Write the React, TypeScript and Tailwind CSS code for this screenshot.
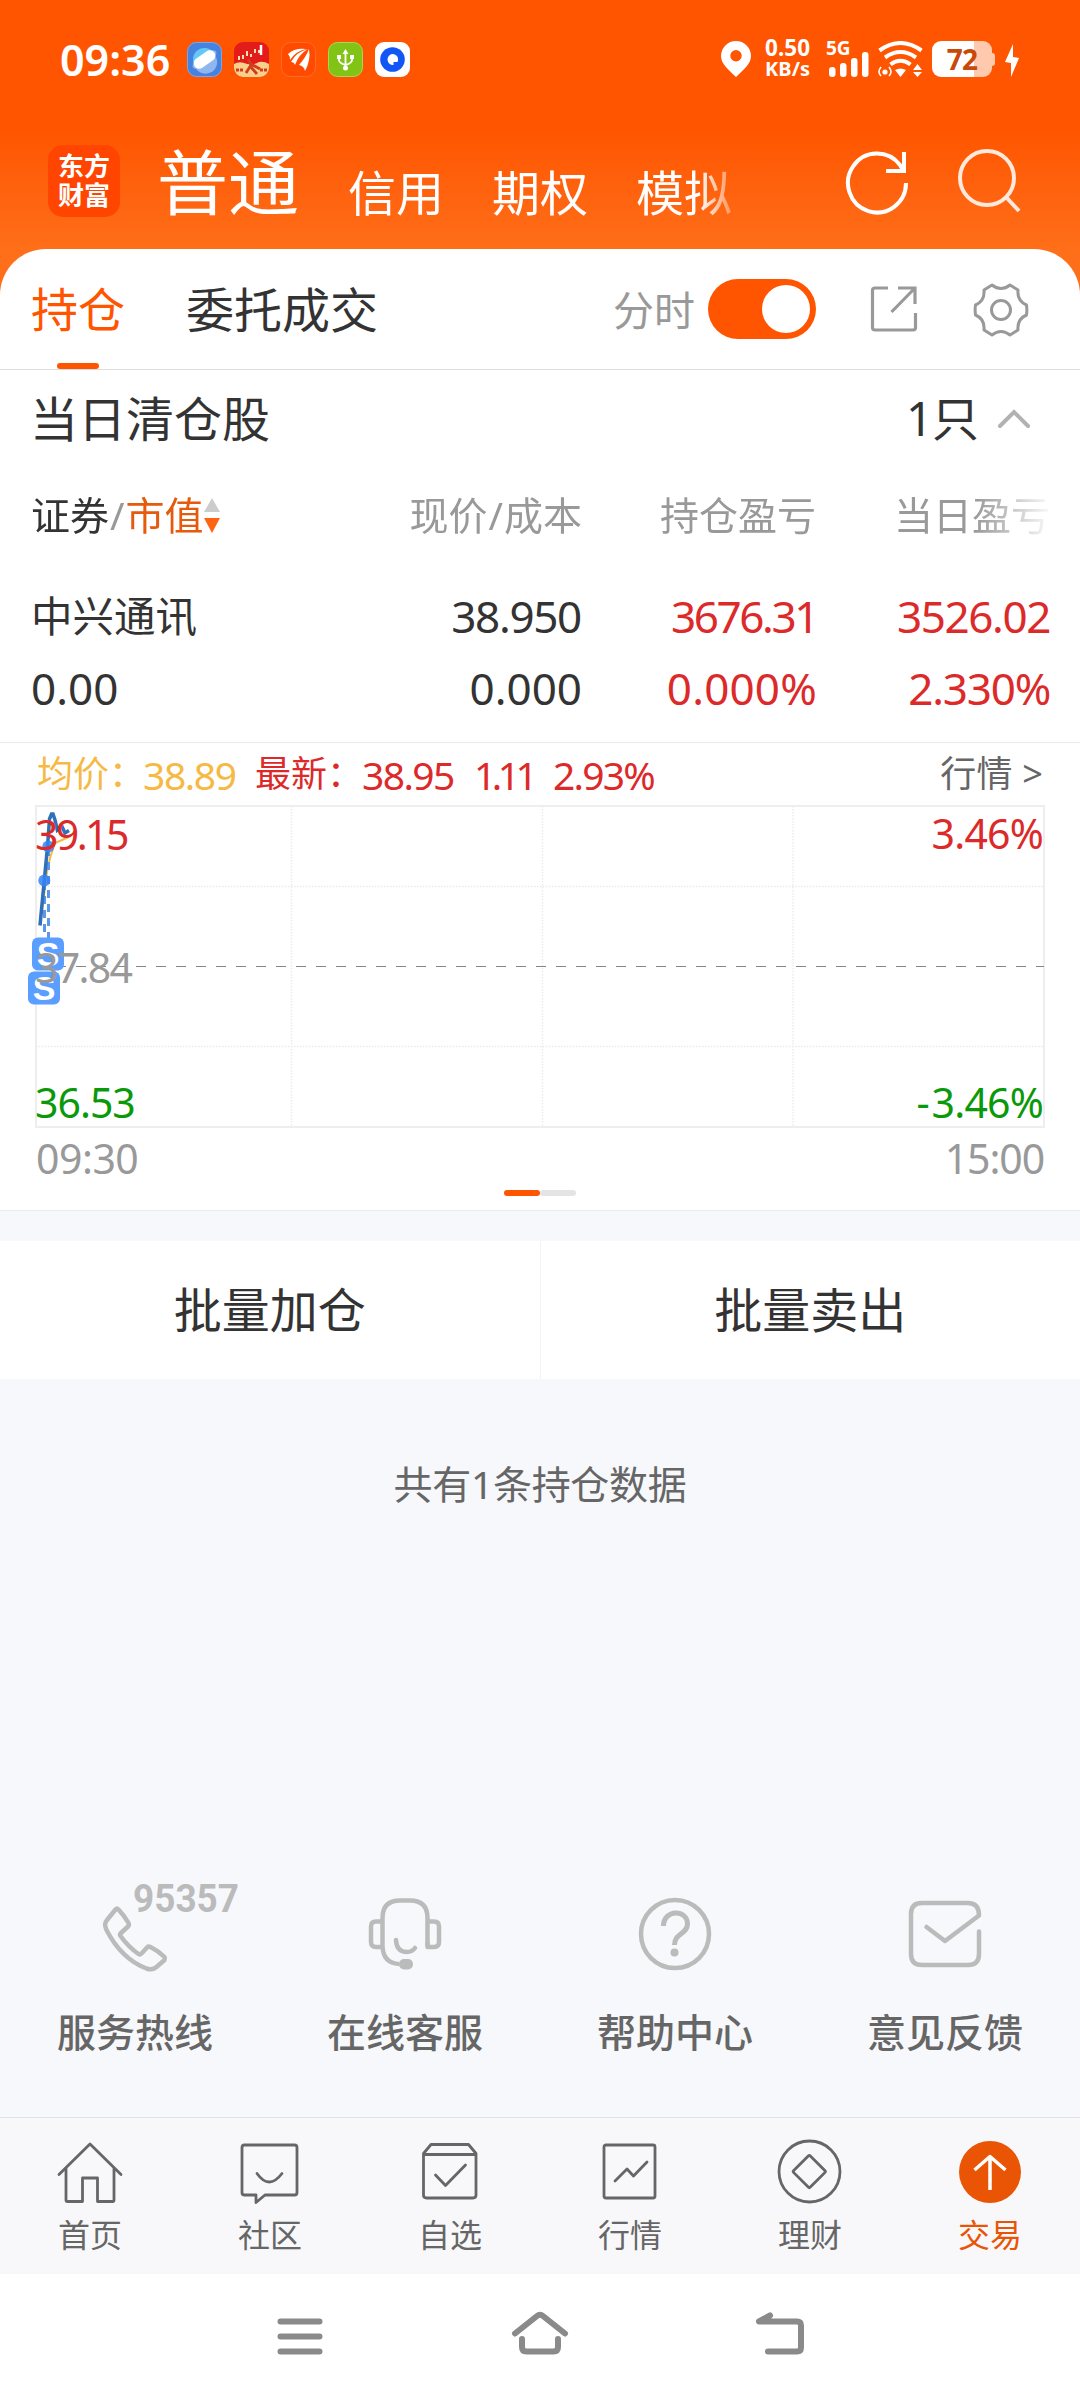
import React from 'react';
import clsx from 'clsx';

interface Holding {
  name: string;
  marketValue: string;
  price: string;
  cost: string;
  profit: string;
  profitRate: string;
  dayProfit: string;
  dayProfitRate: string;
}

const holding: Holding = {
  name: '中兴通讯',
  marketValue: '0.00',
  price: '38.950',
  cost: '0.000',
  profit: '3676.31',
  profitRate: '0.000%',
  dayProfit: '3526.02',
  dayProfitRate: '2.330%',
};

// Status bar
const StatusBar: React.FC = () => (
  <div className="flex h-[120px] items-center justify-between pr-[61px] pb-[2px] pl-[60px] text-white">
    <div className="flex items-center">
      <span className="w-[127px] text-[43px] leading-none font-semibold">09:36</span>
      <div className="flex gap-[12px]">
        <svg className="h-[35px] w-[35px]" viewBox="0 0 35 35" aria-hidden="true">
          <rect x=".5" y=".5" width="34" height="34" rx="9" fill="#4683e0" stroke="#7ba6e8" />
          <circle cx="17.5" cy="17.5" r="11.5" fill="#62c9f5" />
          <path d="M8 25a11.5 11.5 0 0 0 21-10z" fill="#8fb6ef" />
          <ellipse cx="17.5" cy="17.5" rx="14" ry="5.5" fill="#8fb6ef" transform="rotate(-35 17.5 17.5)" />
          <rect x="5.500" y="12" width="24" height="11" rx="5.500" fill="#fff" transform="rotate(-35 17.5 17.5)" />
        </svg>
        <svg className="h-[35px] w-[35px]" viewBox="0 0 35 35" aria-hidden="true">
          <rect width="35" height="35" rx="9" fill="#e41b1b" />
          <path d="M0 22q5-3 10-1 8 3 15-1 5-1 10 2v4a9 9 0 0 1-9 9H9a9 9 0 0 1-9-9z" fill="#fbd08a" />
          <path d="M5 14v4M9 13v4M13 9v5M17 12v3M21 7v4M25 8v3" stroke="#fbe3b0" strokeWidth="2" />
          <path d="M27 3v10" stroke="#fff" strokeWidth="2.500" />
          <path d="m14 17 3 6-5 8m4-7 7 8m-6-10 9 5" stroke="#d33a20" strokeWidth="2.800" fill="none" />
          <path d="M2 28h7M26 28h7" stroke="#d33a20" strokeWidth="3" strokeDasharray="3 1" />
        </svg>
        <svg className="h-[35px] w-[35px]" viewBox="0 0 35 35" aria-hidden="true">
          <rect x=".5" y=".5" width="34" height="34" rx="9" fill="#ff4a00" stroke="#ff6a2c" />
          <path d="M7 12Q13 6 25 7 15 9 9 18 9 14 7 12ZM10 20Q15 10 27 7 18 12 14 23 13 20 10 20ZM18 23Q25 15 28 7 30 18 24 29 23 24 18 23Z" fill="#fff" />
        </svg>
        <svg className="h-[35px] w-[35px]" viewBox="0 0 35 35" aria-hidden="true">
          <rect x=".5" y=".5" width="34" height="34" rx="9" fill="#82c416" stroke="#a9d65d" />
          <g stroke="#fff" strokeWidth="1.800" fill="none">
            <path d="M17.500 10v16M11 15v3q0 3 6.500 5 6.500-2 6.500-5v-3" />
          </g>
          <path d="m17.500 7 3 5h-6zM9 13h4v4H9zM22 13h4v4h-4z" fill="#fff" />
          <circle cx="17.500" cy="26" r="2.500" fill="#fff" />
        </svg>
        <svg className="h-[35px] w-[35px]" viewBox="0 0 35 35" aria-hidden="true">
          <rect width="35" height="35" rx="9" fill="#fff" />
          <circle cx="17.500" cy="17.500" r="12.300" fill="#1257f5" />
          <path d="M17.500 12a5.500 5.500 0 1 0 1 11v-3h4a5.500 5.500 0 0 0-5-8z" fill="#fff" />
        </svg>
      </div>
    </div>

    <div className="flex items-center">
      <svg className="h-[36px] w-[30px]" viewBox="0 0 30 36" aria-hidden="true">
        <path
          fillRule="evenodd"
          d="M15 0a15 15 0 0 1 15 15c0 8-7 13-15 21C7 28 0 23 0 15A15 15 0 0 1 15 0zm0 9a5.700 5.700 0 1 0 0 11.400A5.700 5.700 0 0 0 15 9z"
          fill="#fff"
        />
      </svg>
      <div className="ml-[12px] w-[47px] text-right font-bold">
        <p className="text-[22.500px] leading-[19px]">0.50</p>
        <p className="text-[20px] leading-[23px]">KB/s</p>
      </div>
      <svg className="ml-[17px] h-[38px] w-[43px] overflow-visible" viewBox="0 0 43 38" aria-hidden="true">
        <text x="-1" y="14.500" fontSize="19" fontWeight="700" fill="#fff">5G</text>
        <g fill="#fff">
          <rect x="2" y="27" width="6.500" height="10" rx="3" />
          <rect x="13" y="23" width="6.500" height="14" rx="3" />
          <rect x="24" y="18" width="6.500" height="19" rx="3" />
          <rect x="35" y="12" width="6.500" height="25" rx="3" />
        </g>
      </svg>
      <svg className="ml-[8px] h-[36px] w-[45px]" viewBox="0 0 45 36" aria-hidden="true">
        <g stroke="#fff" strokeWidth="4" fill="none">
          <path d="M1.500 9.500q21-15 42 0" />
          <path d="M7 16.500q15.500-11 31 0" />
          <path d="M12.500 23.500q10-7.500 20 0" />
        </g>
        <path d="M17 29q5.500-3 11 0l-5.500 7zM35 29l4.500-6 4.500 6zM35 31h9l-4.500 5z" fill="#fff" />
        <circle cx="7" cy="31" r="2.600" fill="#fff" />
        <path d="M3 26q-4 5 0 9M11 26q4 5 0 9" stroke="#fff" strokeWidth="1.600" fill="none" />
      </svg>
      <div className="ml-[9px] flex items-center">
        <div className="flex h-[36px] w-[60px] items-center justify-center rounded-[9px] bg-linear-to-r from-white from-70% to-[#ffc9ad] to-70%">
          <span className="text-[28px] leading-none font-bold tracking-[-0.8px] text-[#c9490a]">72</span>
        </div>
        <div className="h-[13px] w-[3px] rounded-r bg-[#ffc9ad]" />
      </div>
      <svg className="mt-[2px] ml-[10px] h-[33px] w-[14px]" viewBox="0 0 14 33" aria-hidden="true">
        <path d="M8 0v13l6 1L6 33V19l-6-1z" fill="#fff" />
      </svg>
    </div>
  </div>
);

// Account type switcher
const AccountNav: React.FC = () => (
  <div className="flex h-[129px] pl-[48px] text-white">
    <div className="mt-[25px] h-[72px] w-[72px] rounded-[15px] bg-[#ff4500] pt-[7px] text-center text-[26px] leading-[29px] font-bold">
      <p>东方</p>
      <p>财富</p>
    </div>
    <h1 className="mt-[22px] ml-[37px] w-[144px] text-[71px] leading-[80px]">普通</h1>
    <div className="mt-[45px] ml-[47px] flex w-[390px] gap-[48px] text-[48px] leading-[56px] whitespace-nowrap [mask-image:linear-gradient(to_right,#000_350px,transparent_400px)]">
      <span>信用</span>
      <span>期权</span>
      <span>模拟</span>
    </div>
    <svg className="mt-[27px] ml-[105px] h-[68px] w-[68px]" viewBox="0 0 68 68" fill="none" stroke="#fff" strokeWidth="4" aria-label="刷新">
      <path d="M63 36A29 29.500 0 1 1 57 18l3 5" />
      <path d="M61 5v19H43" />
    </svg>
    <svg className="mt-[27px] ml-[45px] h-[68px] w-[68px]" viewBox="0 0 68 68" fill="none" stroke="#ffe9dc" strokeWidth="4" aria-label="搜索">
      <circle cx="31" cy="31" r="27" />
      <path d="m50 50 13 14" />
    </svg>
  </div>
);

const HoldingTabs: React.FC = () => (
  <div className="flex h-[121px] rounded-t-[46px] border-b border-[#dedede] bg-white pl-[31px]">
    <div className="flex w-[94px] flex-col items-center pt-[32px]">
      <span className="h-[82px] text-[47px] leading-[57px] text-[#ff5500]">持仓</span>
      <i className="h-[6px] w-[42px] shrink-0 rounded-full bg-[#ff5500]" />
    </div>
    <span className="ml-[61px] pt-[32px] text-[48px] leading-[57px] text-[#333]">委托成交</span>
    <span className="ml-[235px] pt-[33px] text-[41px] leading-[57px] text-[#999]">分时</span>
    <button className="mt-[30px] ml-[13px] flex h-[60px] w-[108px] items-center justify-end rounded-full bg-[#ff5500] pr-[6px]" role="switch" aria-checked="true" aria-label="分时">
      <i className="h-[48px] w-[48px] rounded-full bg-white" />
    </button>
    <svg className="mt-[36px] ml-[54px] h-[48px] w-[48px]" viewBox="0 0 48 48" fill="none" stroke="#999" strokeWidth="3.200" aria-hidden="true">
      <path d="M18 3H5q-2.500 0-2.500 2.500v37Q2.500 45 5 45h38q2.500 0 2.500-2.500V28" />
      <path d="M28 3h17v16M44 4 21.500 27" />
    </svg>
    <svg className="mt-[33px] ml-[55px] h-[56px] w-[56px]" viewBox="-28 -28 56 56" fill="none" stroke="#999" strokeWidth="3" aria-hidden="true">
      <circle r="9.500" />
      <path d="M-9-25Q0-18 9-25L17-20Q16-9 25.500-5Q26.200 0 25.500 5Q16 9 17 20L9 25Q0 18-9 25L-17 20Q-16 9-25.500 5Q-26.200 0-25.500-5Q-16-9-17-20Z" strokeLinejoin="round" />
    </svg>
  </div>
);

const Cell: React.FC<{ children: React.ReactNode; className?: string }> = ({ children, className }) => (
  <span className={clsx('w-[234px] text-right', className)}>{children}</span>
);

const HoldingTable: React.FC = () => (
  <section className="border-b border-[#ececec] bg-white pb-[16px] text-[#333]">
    <div className="flex h-[97px] items-center justify-between pr-[49px] pl-[30px]">
      <h2 className="text-[48px] leading-none">当日清仓股</h2>
      <div className="flex items-center">
        <span className="text-[47px] leading-none tracking-[-1px]">1只</span>
        <svg className="ml-[19px] h-[20px] w-[34px]" viewBox="0 0 34 20" fill="none" stroke="#b2b2b2" strokeWidth="4" strokeLinecap="round" aria-hidden="true">
          <path d="m3 17 14-14 14 14" />
        </svg>
      </div>
    </div>

    <div className="flex h-[95px] items-center pl-[31px] text-[39px] leading-none whitespace-nowrap text-[#999] [mask-image:linear-gradient(to_right,#000_975px,transparent_1055px)]">
      <span className="flex w-[298px] items-center">
        <span className="text-[#333]">证券</span>
        <span className="mx-[1px]">/</span>
        <span className="text-[#e55a0c]">市值</span>
        <svg className="h-[36px] w-[16px]" viewBox="0 0 16 36" aria-hidden="true">
          <path d="m8 1 8 14H0z" fill="#ccc" />
          <path d="m8 36 8-15H0z" fill="#ff6412" />
        </svg>
      </span>
      <Cell className="w-[253px]!">
        现价<span className="mx-[1px]">/</span>成本
      </Cell>
      <Cell>持仓盈亏</Cell>
      <Cell>当日盈亏</Cell>
    </div>

    <div className="mt-[18px] mb-[2px] text-[44px] leading-[72px]">
      <div className="flex pl-[31px]">
        <span className="w-[301px] text-[41.500px]">{holding.name}</span>
        <Cell className="w-[249px]! tracking-[-1.300px]">{holding.price}</Cell>
        <Cell className="w-[236px]! tracking-[-2.400px] text-[#dc2a2a]">{holding.profit}</Cell>
        <Cell className="w-[233px]! tracking-[-1.400px] text-[#dc2a2a]">{holding.dayProfit}</Cell>
      </div>
      <div className="flex pl-[31px]">
        <span className="w-[301px]">{holding.marketValue}</span>
        <Cell className="w-[250px]!">{holding.cost}</Cell>
        <Cell className="w-[235px]! tracking-[0.200px] text-[#dc2a2a]">{holding.profitRate}</Cell>
        <Cell className="w-[233px]! tracking-[-1.200px] text-[#dc2a2a]">{holding.dayProfitRate}</Cell>
      </div>
    </div>
  </section>
);

// Intraday chart
const TimeChart: React.FC = () => (
  <section className="border-b border-[#e9eaeb] bg-white">
    <div className="flex h-[62px] items-center pr-[37px] pl-[37px] text-[36px] leading-none whitespace-nowrap text-[#dc2a2a]">
      <span className="w-[106px] text-[#f5b944]">均价：</span>
      <span className="w-[112px] text-[39px] tracking-[-1.400px] text-[#f5b944]">38.89</span>
      <span className="w-[107px]">最新：</span>
      <span className="w-[112px] text-[39px] tracking-[-1.600px]">38.95</span>
      <span className="w-[79px] text-[39px] tracking-[-4.500px]">1.11</span>
      <span className="text-[39px] tracking-[-1.800px]">2.93%</span>
      <span className="ml-auto text-[36px] tracking-[0.200px] text-[#666]">行情 &gt;</span>
    </div>

    <div className="relative h-[323px] text-[41px] leading-[50px]">
      <svg className="h-[323px] w-[1080px]" viewBox="0 805 1080 323" fill="none" aria-hidden="true">
        <path d="M36 806H1044V1127H36Z" stroke="#eee" strokeWidth="2" />
        <path d="M36 886.500H1044M36 1046.500H1044M291.500 806V1127M542.500 806V1127M793 806V1127" stroke="#ebebeb" strokeWidth="1.500" strokeDasharray="1.500 1.500" />
        <path d="M36 966.500H1044" stroke="#858585" strokeDasharray="10 10" />
        <path d="M40 925 44 896 46 877 50 858 55 843 69 837" stroke="#f5b944" strokeWidth="2" />
        <path d="M44.500 882V940M48.500 848V938" stroke="#5b98e8" strokeWidth="3" strokeDasharray="8 6" />
        <path d="M40 925.500 44.300 880 47.500 847 49.500 819 51.500 814H53L55 820 57.300 830 61.700 826 65 833 69 830.500" stroke="#3070b8" strokeWidth="3.500" />
        <circle cx="44.300" cy="880.500" r="6" fill="#3583f5" fillOpacity=".85" />
        <circle cx="48.300" cy="846.500" r="6" fill="#3583f5" fillOpacity=".85" />
        <rect x="32" y="937.500" width="32" height="33" rx="6" fill="#5a9eff" />
        <rect x="28" y="971.500" width="32" height="33" rx="6" fill="#5a9eff" />
        <g fill="#fff" fontSize="34" fontWeight="600" textAnchor="middle" fontFamily="Liberation Sans, sans-serif">
          <text x="48" y="966">S</text>
          <text x="44" y="1000">S</text>
        </g>
      </svg>
      <span className="absolute top-[4px] left-[35px] tracking-[-2.600px] text-[#dc2a2a]">39.15</span>
      <span className="absolute top-[137px] left-[35px] tracking-[-1.700px] text-[#999]">37.84</span>
      <span className="absolute top-[272px] left-[35px] tracking-[-1px] text-[#0a990a]">36.53</span>
      <span className="absolute top-[3px] right-[37px] tracking-[-0.800px] text-[#dc2a2a]">3.46%</span>
      <span className="absolute top-[272px] right-[37px] text-[#0a990a]">
        -<span className="ml-[2px] tracking-[-0.800px]">3.46%</span>
      </span>
    </div>

    <div className="flex h-[62px] items-center justify-between px-[36px] pb-[2px] text-[41px] leading-none tracking-[-0.500px] text-[#999]">
      <span>09:30</span>
      <span className="tracking-[-1.100px]">15:00</span>
    </div>

    <div className="flex justify-center pb-[14px]">
      <i className="h-[6px] w-[36px] rounded-full bg-[#ff5500]" />
      <i className="h-[6px] w-[36px] rounded-full bg-[#e4e4e4]" />
    </div>
  </section>
);

const PhoneIcon = () => (
  <svg className="h-[90px] w-[144px] overflow-visible" viewBox="0 0 144 90" fill="none" stroke="#bbb" strokeWidth="4.500" strokeLinejoin="round" aria-hidden="true">
    <path
      transform="translate(4.500 -1)"
      d="M48 27.500Q49.500 26 51 27.500 57 34 61 41 62 43 60.500 44.500L53 51.500Q52 52.500 53 54 61 65 71 72 72.500 73 74 71.500L80 65Q81 64 83 65 91 69 97 75 98 76.500 97 78L89 85Q85 88.500 79 86.500 54 77 39 48 36 42 39.500 38Z"
    />
    <text x="70" y="29" fontSize="38" fontWeight="700" fill="#bbb" stroke="none" fontFamily="Roboto, sans-serif" textLength="106" lengthAdjust="spacingAndGlyphs">95357</text>
  </svg>
);

const HeadsetIcon = () => (
  <svg className="h-[90px] w-[144px]" viewBox="0 0 144 90" fill="none" stroke="#bbb" strokeWidth="4.500" aria-hidden="true">
    <path d="M49.500 63V35Q49.500 17.500 67 17.500H77Q94.500 17.500 94.500 35V63M49.500 63Q50 80 66 81" />
    <path d="M49.500 38.500H43Q38 38.500 38 43.500V59Q38 64 43 64H49.500M94.500 38.500H101Q106 38.500 106 43.500V59Q106 64 101 64H94.500V59" strokeLinejoin="round" />
    <path d="M63 57Q63.500 69 74 69 79 69 82 65" strokeLinecap="round" />
    <rect x="66" y="76" width="14" height="10.500" rx="5" fill="#bbb" stroke="none" />
  </svg>
);

const HelpIcon = () => (
  <svg className="h-[90px] w-[144px]" viewBox="0 0 144 90" fill="none" stroke="#bbb" strokeWidth="4.500" aria-hidden="true">
    <circle cx="72" cy="51" r="34" />
    <path d="M60.500 43C60.500 26 84.500 26 84.500 41 84.500 51 71.500 50 71.500 62" strokeWidth="5" />
    <circle cx="71.500" cy="69.500" r="4" fill="#bbb" stroke="none" />
  </svg>
);

const MailIcon = () => (
  <svg className="h-[90px] w-[144px]" viewBox="0 0 144 90" fill="none" stroke="#bbb" strokeWidth="4.500" strokeLinecap="round" strokeLinejoin="round" aria-hidden="true">
    <path d="M106 48.500V71Q106 82 95 82H49Q38 82 38 71V31Q38 20 49 20H95Q106 20 106 32.500L72 58 53.500 44" />
  </svg>
);

const services = [
  { label: '服务热线', icon: PhoneIcon },
  { label: '在线客服', icon: HeadsetIcon },
  { label: '帮助中心', icon: HelpIcon },
  { label: '意见反馈', icon: MailIcon },
];

const tabs = [
  {
    label: '首页',
    icon: <path d="M5 35.500 36 5l31 30.500M12 29v32q0 1.500 1.500 1.500H28.500V39H43.500v23.500h15q1.500 0 1.500-1.500V29" />,
  },
  {
    label: '社区',
    icon: (
      <>
        <path d="M10.500 6h50q2.500 0 2.500 2.500v45q0 2.500-2.500 2.500H31l-9 7.500V56H10.500Q8 56 8 53.500v-45Q8 6 10.500 6Z" />
        <path d="M23 34.500q12 17 25 0" />
      </>
    ),
  },
  {
    label: '自选',
    icon: (
      <>
        <path d="M9.500 14.500V56q0 3 3 3h46.500q3 0 3-3V14.500L54.500 5.500H17ZM9.500 15.500h52.500" />
        <path d="m21.500 36 10 10.500 20-20.500" />
      </>
    ),
  },
  {
    label: '行情',
    icon: (
      <>
        <rect x="10" y="6" width="51" height="53" rx="2" />
        <path d="m21 42 12-12 6.500 7L53 23" />
      </>
    ),
  },
  {
    label: '理财',
    icon: (
      <>
        <circle cx="35.500" cy="32.500" r="30.500" />
        <rect x="23.500" y="21" width="23.500" height="23.500" rx="1.500" transform="rotate(45 35.500 32.700)" />
      </>
    ),
  },
  {
    label: '交易',
    active: true,
    icon: (
      <>
        <circle cx="36" cy="33" r="31" fill="#e95504" stroke="none" />
        <path d="M36 51V17.500M20.500 31 36 17.500 51.500 31" stroke="#fff" strokeWidth="3.500" strokeLinecap="butt" />
      </>
    ),
  },
];

export default function App() {
  return (
    <div className="flex h-[2400px] w-[1080px] flex-col overflow-hidden bg-[#f7f8fb] font-['Noto_Sans','Noto_Sans_CJK_SC',sans-serif]">
      <header className="bg-linear-to-b from-[#ff5500] from-[130px] to-[#ff6e18] to-[250px]">
        <StatusBar />
        <AccountNav />
        <HoldingTabs />
      </header>

      <HoldingTable />
      <TimeChart />

      <div className="mt-[30px] flex h-[138px] items-center bg-white text-center text-[48px] leading-none text-[#333]">
        <button className="h-full flex-1 border-r border-[#f3f3f5]">批量加仓</button>
        <button className="h-full flex-1">批量卖出</button>
      </div>

      <p className="mt-[75px] text-center text-[39px] leading-[60px] tracking-[-0.300px] text-[#666]">共有1条持仓数据</p>

      {/* Service entries */}
      <div className="mt-auto grid grid-cols-4 pb-[57px]">
        {services.map(({ label, icon: Icon }) => (
          <div key={label} className="flex flex-col items-center">
            <Icon />
            <span className="mt-[31px] text-[39px] leading-[56px] font-medium text-[#666]">{label}</span>
          </div>
        ))}
      </div>

      {/* Bottom tabs */}
      <nav className="grid h-[157px] grid-cols-6 border-t border-[#e2e2e4] bg-[#f8f8fb] pt-[21px]">
        {tabs.map((tab) => (
          <div key={tab.label} className={clsx('flex flex-col items-center', tab.active ? 'text-[#e95504]' : 'text-[#666]')}>
            <svg className="h-[68px] w-[72px]" viewBox="0 0 72 68" fill="none" stroke="currentColor" strokeWidth="2.800" strokeLinecap="round" strokeLinejoin="round" aria-hidden="true">
              {tab.icon}
            </svg>
            <span className="mt-[8px] text-[32px] leading-[40px]">{tab.label}</span>
          </div>
        ))}
      </nav>

      {/* System navigation */}
      <div className="flex h-[126px] justify-center gap-[168px] bg-white pt-[28px]">
        <svg className="h-[54px] w-[72px]" viewBox="0 0 72 54" stroke="#8a8a8a" strokeWidth="6" strokeLinecap="round" aria-label="菜单">
          <path d="M16.500 19.500h39M16.500 34.500h39M16.500 49.500h39" />
        </svg>
        <svg className="h-[54px] w-[72px]" viewBox="0 0 72 54" fill="none" stroke="#8a8a8a" strokeWidth="6" strokeLinecap="round" strokeLinejoin="round" aria-label="主页">
          <path d="m11 31.500 22-17.500q3-2.500 6 0l22 17.500M18 37v8q0 4.500 4.500 4.500h27Q54 49.500 54 45v-8" />
        </svg>
        <svg className="h-[54px] w-[72px]" viewBox="0 0 72 54" fill="none" stroke="#8a8a8a" strokeWidth="6" strokeLinecap="round" strokeLinejoin="round" aria-label="返回">
          <path d="m26 13.500-11 6h38q4 0 4 4V45.500q0 4-4 4H24" />
        </svg>
      </div>
    </div>
  );
}
